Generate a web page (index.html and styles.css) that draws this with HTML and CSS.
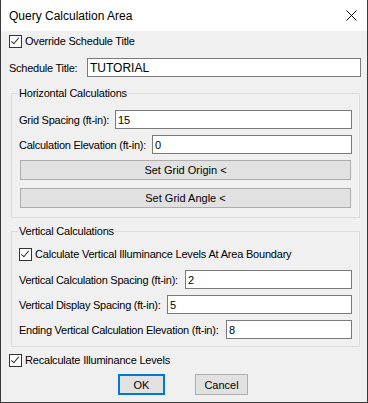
FILE: index.html
```html
<!DOCTYPE html>
<html lang="en">
<head>
    <meta charset="UTF-8">
    <title>Query Calculation Area</title>
    <link rel="stylesheet" href="styles.css">
</head>
<body>

<div class="window">
    <div class="titlebar">
        <span class="title">Query Calculation Area</span>
        <svg class="close" width="11" height="11" viewBox="0 0 11 11">
            <path d="M0.5 0.5 L10.5 10.5 M10.5 0.5 L0.5 10.5" stroke="#000" stroke-width="1" fill="none"/>
        </svg>
    </div>

    <div class="content">
        <label class="check row-override">
            <span class="box checked"></span>Override Schedule Title
        </label>

        <div class="field row-title">
            <span>Schedule Title:</span>
            <input type="text" class="in-title" value="TUTORIAL">
        </div>

        <fieldset class="group group-h">
            <legend>Horizontal Calculations</legend>
            <div class="field">
                <span>Grid Spacing (ft-in):</span>
                <input type="text" class="in-grid" value="15">
            </div>
            <div class="field gap6">
                <span>Calculation Elevation (ft-in):</span>
                <input type="text" class="in-elev" value="0">
            </div>
            <button class="wide first">Set Grid Origin &lt;</button>
            <button class="wide second">Set Grid Angle &lt;</button>
        </fieldset>

        <fieldset class="group group-v">
            <legend>Vertical Calculations</legend>
            <label class="check">
                <span class="box checked"></span>Calculate Vertical Illuminance Levels At Area Boundary
            </label>
            <div class="field gap8">
                <span>Vertical Calculation Spacing (ft-in):</span>
                <input type="text" class="in-vspace" value="2">
            </div>
            <div class="field gap6">
                <span>Vertical Display Spacing (ft-in):</span>
                <input type="text" class="in-vdisp" value="5">
            </div>
            <div class="field gap6">
                <span>Ending Vertical Calculation Elevation (ft-in):</span>
                <input type="text" class="in-vend" value="8">
            </div>
        </fieldset>

        <label class="check row-recalc">
            <span class="box checked"></span>Recalculate Illuminance Levels
        </label>

        <div class="actions">
            <button class="ok">OK</button>
            <button class="cancel">Cancel</button>
        </div>
    </div>
</div>

</body>
</html>
```

FILE: styles.css
```css
body { margin: 0; font-family: "Liberation Sans", Arial, sans-serif; font-size: 11px; color: #000; }
.window { width: 368px; height: 403px; box-sizing: border-box; border: 1px solid #3a3a3a; border-top: none; background: #f0f0f0; display: flex; flex-direction: column; }
.titlebar { height: 31px; background: #fff; display: flex; align-items: center; padding: 0 10px 0 8px; flex-shrink: 0; }
.title { font-size: 12px; flex: 1; padding-top: 1px; }

.content { padding: 4px 6px 0 8px; display: flex; flex-direction: column; }

.check { display: flex; align-items: center; height: 13px; line-height: 13px; letter-spacing: -0.2px; }
.box { width: 11px; height: 11px; border: 1px solid #333; background: #fff; margin-right: 3px; flex-shrink: 0; position: relative; }
.box.checked::after { content: ""; position: absolute; left: 3px; top: 0px; width: 3px; height: 7px; border: solid #333; border-width: 0 1px 1px 0; transform: rotate(40deg); }

.field { display: flex; align-items: center; height: 19px; letter-spacing: -0.25px; }
.field input { margin-left: auto; height: 19px; box-sizing: border-box; border: 1px solid #7a7a7a; background: #fff; font: inherit; letter-spacing: 0; padding: 0 2px; outline: none; color: #000; }
.row-title { margin-top: 10px; }
.in-title { width: 274px; font-size: 12px !important; }
.in-grid { width: 237px; }
.in-elev { width: 200px; }
.in-vspace { width: 167px; }
.in-vdisp { width: 185px; }
.in-vend { width: 126px; }
.gap6 { margin-top: 6px; }
.gap8 { margin-top: 9px; }

.group { margin: 0 1px 0 2px; border: 1px solid #dcdcdc; padding: 0 7px; }
.group legend { padding: 0 1px; margin-left: -1px; line-height: 13px; height: 13px; letter-spacing: -0.2px; }
.group-h { margin-top: 10px; padding-top: 10px; padding-bottom: 9px; }
.group-v { margin-top: 7px; padding-top: 10px; padding-bottom: 7px; }

button { font-family: inherit; font-size: 11px; color: #000; background: #e1e1e1; border: 1px solid #adadad; padding: 0; }
.wide { display: block; width: calc(100% - 2px); height: 20px; margin-left: 1px; }
.wide.first { margin-top: 6px; }
.wide.second { margin-top: 8px; }

.row-recalc { margin-top: 7px; }
.actions { display: flex; justify-content: center; gap: 30px; margin-top: 7px; padding-right: 4px; }
.ok { width: 47px; height: 21px; border: 2px solid #0078d7; }
.cancel { width: 53px; height: 21px; }
```
